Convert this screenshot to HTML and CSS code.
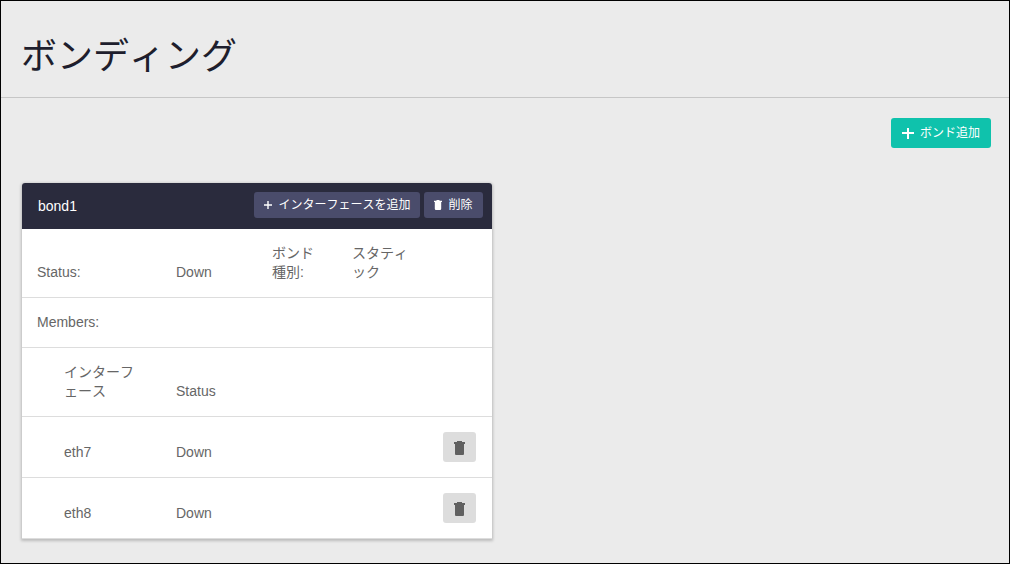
FILE: index.html
```html
<!DOCTYPE html>
<html lang="ja">
<head>
    <meta charset="UTF-8">
    <meta name="viewport" content="width=device-width, initial-scale=1.0">
    <title>ボンディング</title>
    <link rel="stylesheet" href="styles.css">
</head>
<body>
    <header class="page-header">
        <h1>ボンディング</h1>
    </header>

    <main class="content">
        <div class="toolbar">
            <button type="button" class="btn btn-primary">
                <svg class="icon-plus" viewBox="0 0 12 12" aria-hidden="true"><path d="M5 1h2v4h5v2H7v5H5V7H0V5h5z"/></svg>
                <span>ボンド追加</span>
            </button>
        </div>

        <div class="bonds">
            <section class="card">
                <div class="card-header">
                    <h2>bond1</h2>
                    <div class="card-actions">
                        <button type="button" class="btn btn-dark">
                            <svg class="icon-plus-small" viewBox="0 0 8 8" aria-hidden="true"><path d="M3.300 0h1.400v3.300H8v1.400H4.700V8H3.300V4.700H0V3.300h3.300z"/></svg>
                            <span>インターフェースを追加</span>
                        </button>
                        <button type="button" class="btn btn-dark">
                            <svg class="icon-trash-small" viewBox="0 0 8 10" aria-hidden="true"><path d="M2.500 0h3v.7H8V2H0V.7h2.500zM.8 2h6.400v6.800q0 1.200-1.200 1.200H2Q.8 10 .8 8.800z"/></svg>
                            <span>削除</span>
                        </button>
                    </div>
                </div>

                <table class="bond-table">
                    <colgroup>
                        <col class="col-name">
                        <col class="col-status">
                        <col class="col-label">
                        <col class="col-type">
                        <col>
                    </colgroup>
                    <tbody>
                        <tr>
                            <td>Status:</td>
                            <td>Down</td>
                            <td>ボンド種別:</td>
                            <td>スタティック</td>
                            <td></td>
                        </tr>
                        <tr>
                            <td colspan="5">Members:</td>
                        </tr>
                        <!-- Members -->
                        <tr>
                            <th scope="col" class="member">インターフェース</th>
                            <th scope="col">Status</th>
                            <td colspan="3"></td>
                        </tr>
                        <tr>
                            <td class="member">eth7</td>
                            <td>Down</td>
                            <td colspan="3" class="actions">
                                <button type="button" class="btn btn-icon" aria-label="eth7 削除">
                                    <svg class="icon-trash" viewBox="0 0 11 14" aria-hidden="true"><path d="M3 0h5v1h3v2H0V1h3zM1 3h9v10q0 1-1 1H2q-1 0-1-1z"/></svg>
                                </button>
                            </td>
                        </tr>
                        <tr>
                            <td class="member">eth8</td>
                            <td>Down</td>
                            <td colspan="3" class="actions">
                                <button type="button" class="btn btn-icon" aria-label="eth8 削除">
                                    <svg class="icon-trash" viewBox="0 0 11 14" aria-hidden="true"><path d="M3 0h5v1h3v2H0V1h3zM1 3h9v10q0 1-1 1H2q-1 0-1-1z"/></svg>
                                </button>
                            </td>
                        </tr>
                    </tbody>
                </table>
            </section>
        </div>
    </main>
</body>
</html>
```
FILE: styles.css
```css
* {
    box-sizing: border-box;
}
body {
    margin: 0;
    min-height: 100vh;
    border: 1px solid #000;
    background-color: #ebebeb;
    color: #666;
    font-family: "Liberation Sans", "Noto Sans CJK JP", sans-serif;
    font-size: 14px;
    font-kerning: none;
    line-height: 19px;
}
.page-header {
    padding: 36px 20px 20px;
    border-bottom: 1px solid #c6c6c6;
}
h1 {
    margin: 0;
    color: #1e1e2d;
    font-size: 36px;
    font-weight: normal;
    line-height: 40px;
}
.content {
    padding: 20px 18px 20px 21px;
}
.toolbar {
    display: flex;
    justify-content: flex-end;
    margin-bottom: 35px;
}
.bonds {
    display: grid;
    grid-template-columns: 1fr 1fr;
    gap: 30px;
}
.card {
    background-color: #fff;
    border-radius: 3px 3px 0 0;
    box-shadow: 0 1px 3px 1px rgba(0, 0, 0, 0.2);
}
.card-header {
    display: flex;
    align-items: center;
    justify-content: space-between;
    height: 46px;
    padding: 0 9px 0 16px;
    background-color: #2a2b3d;
    border-radius: 3px 3px 0 0;
}
h2 {
    margin: 0;
    color: #fff;
    font-size: 14px;
    font-weight: normal;
}
.card-actions {
    display: flex;
    gap: 4px;
    margin-bottom: 2px;
}

/* Buttons */
.btn {
    display: flex;
    align-items: center;
    justify-content: center;
    gap: 6px;
    height: 30px;
    padding: 0 10px;
    border: none;
    border-radius: 3px;
    color: #fff;
    font-family: inherit;
    font-size: 12px;
    font-kerning: none;
    white-space: nowrap;
    cursor: pointer;
}
.btn span {
    padding-bottom: 3px;
}
.btn-primary {
    padding: 0 11px;
    background-color: #0fc2ac;
}
.btn-dark {
    height: 26px;
    background-color: #4a4c6b;
}
.btn-icon {
    width: 33px;
    margin-left: auto;
    padding-top: 2px;
    background-color: #ddd;
    color: #606060;
}
.btn svg {
    flex: none;
    fill: currentColor;
}
.icon-plus {
    width: 12px;
    height: 12px;
}
.icon-plus-small {
    width: 8px;
    height: 8px;
}
.icon-trash-small {
    width: 8px;
    height: 10px;
}
.icon-trash {
    width: 11px;
    height: 14px;
}

/* Bond details */
.bond-table {
    width: 100%;
    table-layout: fixed;
    border-collapse: separate;
    border-spacing: 0;
}
.col-name {
    width: 139px;
}
.col-status {
    width: 96px;
}
.col-label {
    width: 80px;
}
.col-type {
    width: 91px;
}
.bond-table td,
.bond-table th {
    padding: 15px;
    border-bottom: 1px solid #ddd;
    font-weight: normal;
    text-align: left;
    vertical-align: bottom;
    word-break: break-all;
}
.bond-table .member {
    padding-left: 42px;
}
.bond-table .actions {
    padding-right: 16px;
}
```
